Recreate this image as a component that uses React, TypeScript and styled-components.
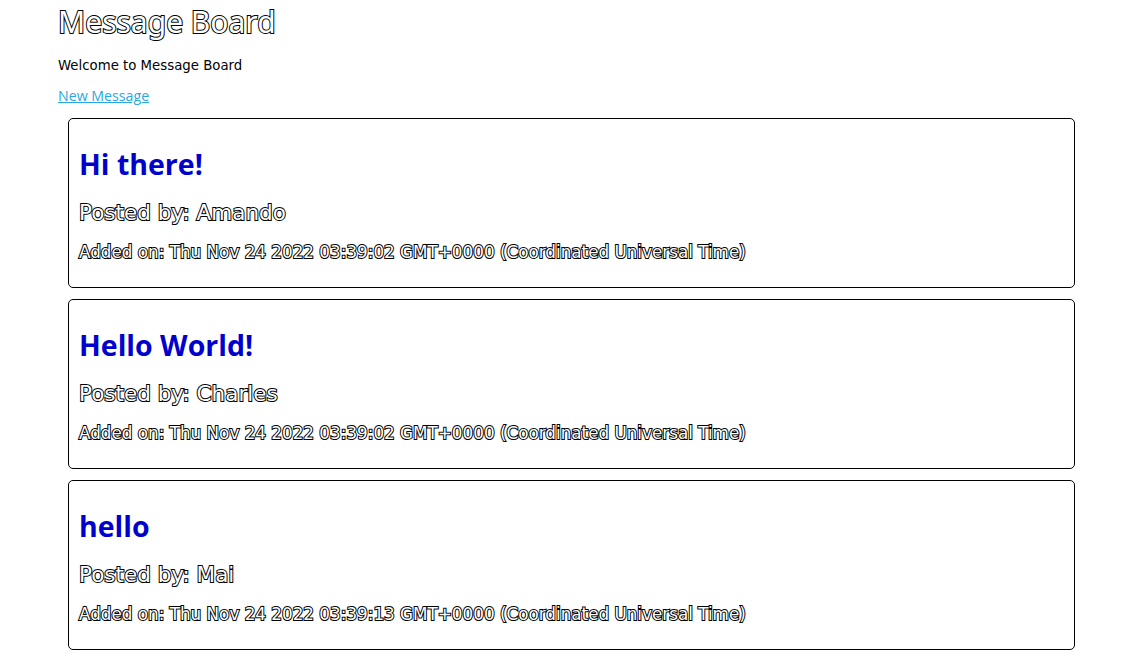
import React from "react";
import styled, { createGlobalStyle } from "styled-components";

const Global = createGlobalStyle`
  body {
    margin: 0;
    background: #ffffff;
    font-family: "DejaVu Sans", sans-serif;
  }
`;

const outline = `
  color: #ffffff;
  -webkit-text-stroke: 2px #000;
  paint-order: stroke fill;
`;

const Page = styled.div`
  padding: 0 58px;
`;

const Title = styled.h1`
  margin: 0;
  padding-top: 2px;
  font-family: "Noto Sans", "Open Sans", sans-serif;
  font-size: 30px;
  font-weight: 400;
  line-height: 40px;
  ${outline}
`;

const Welcome = styled.p`
  margin: 15px 0 0;
  font-size: 13.3px;
  line-height: 18px;
  color: #000;
`;

const NewLink = styled.a`
  display: inline-block;
  margin-top: 11px;
  font-family: "Open Sans", sans-serif;
  font-size: 14.2px;
  line-height: 20px;
  color: #2aa8e0;
  text-decoration: underline;
`;

const List = styled.div`
  display: flex;
  flex-direction: column;
  gap: 11px;
  margin: 12px 5px 0 10px;
`;

const Card = styled.div`
  border: 1px solid #000;
  border-radius: 5px;
  height: 170px;
  box-sizing: border-box;
  padding: 23px 10px 0;
`;

const Heading = styled.h2`
  margin: 0;
  font-family: "Open Sans", sans-serif;
  font-size: 28.5px;
  line-height: 44px;
  font-weight: 700;
  color: #0000cd;
`;

const Posted = styled.h3`
  margin: 13px 0 0;
  font-size: 21.5px;
  line-height: 28px;
  font-weight: 400;
  ${outline}
`;

const Added = styled.h4`
  margin: 14px 0 0;
  font-size: 16.8px;
  line-height: 22px;
  font-weight: 400;
  ${outline}
`;

const messages = [
  { text: "Hi there!", user: "Amando", added: "Thu Nov 24 2022 03:39:02 GMT+0000 (Coordinated Universal Time)" },
  { text: "Hello World!", user: "Charles", added: "Thu Nov 24 2022 03:39:02 GMT+0000 (Coordinated Universal Time)" },
  { text: "hello", user: "Mai", added: "Thu Nov 24 2022 03:39:13 GMT+0000 (Coordinated Universal Time)" },
];

export default function App() {
  return (
    <>
      <Global />
      <Page>
        <Title>Message Board</Title>
        <Welcome>Welcome to Message Board</Welcome>
        <NewLink href="#">New Message</NewLink>
        <List>
          {messages.map((m, i) => (
            <Card key={i}>
              <Heading>{m.text}</Heading>
              <Posted>Posted by: {m.user}</Posted>
              <Added>Added on: {m.added}</Added>
            </Card>
          ))}
        </List>
      </Page>
    </>
  );
}
